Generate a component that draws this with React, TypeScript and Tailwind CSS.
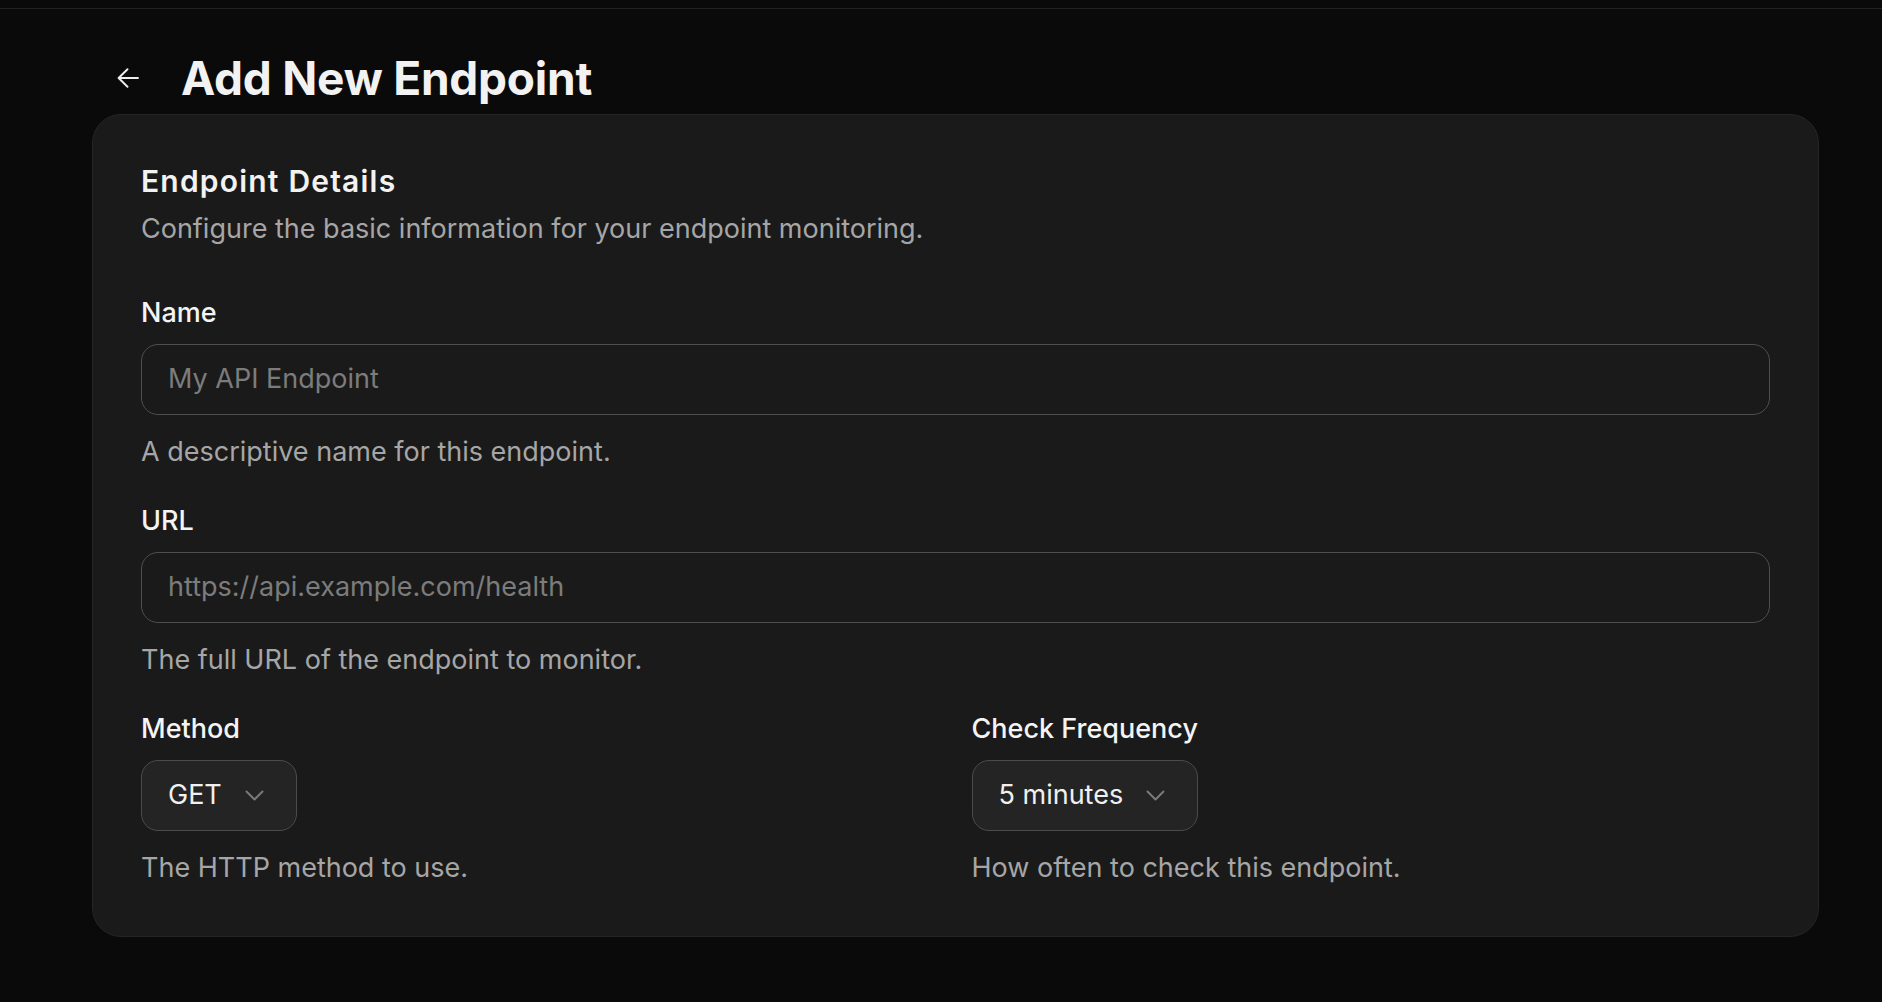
import React from "react";

function ArrowLeft() {
  return (
    <svg width="22" height="20" viewBox="0 0 22 20" fill="none" className="shrink-0">
      <path d="M21 10H1.8M10.5 1.2 1.6 10l8.9 8.8" stroke="#ededed" strokeWidth="1.9" strokeLinecap="round" strokeLinejoin="round" />
    </svg>
  );
}

function Chevron() {
  return (
    <svg width="19" height="11" viewBox="0 0 19 11" fill="none" className="shrink-0">
      <path d="M1.5 1.5 9.5 9.5l8-8" stroke="#7a7a7a" strokeWidth="2" strokeLinecap="round" strokeLinejoin="round" />
    </svg>
  );
}

function Field({ label, placeholder, help }: { label: string; placeholder: string; help: string }) {
  return (
    <div className="flex flex-col">
      <label className="text-[27px] leading-[40px] font-medium text-[#f4f4f4]">{label}</label>
      <div className="mt-[11px] flex h-[71px] items-center rounded-[17px] border border-[#4e4e4e] pl-[26px] text-[27px] text-[#7c7c7c]">
        {placeholder}
      </div>
      <p className="mt-[17px] text-[27px] leading-[40px] text-[#a6a6a6]">{help}</p>
    </div>
  );
}

function SelectField({ label, value, help }: { label: string; value: string; help: string }) {
  return (
    <div className="flex flex-col items-start">
      <label className="text-[27px] leading-[40px] font-medium text-[#f4f4f4]">{label}</label>
      <div className="mt-[11px] flex h-[71px] items-center gap-[23px] rounded-[17px] border border-[#4b4b4b] bg-[#242424] pl-[26px] pr-[32px] text-[27px] text-[#f0f0f0]">
        <span>{value}</span>
        <Chevron />
      </div>
      <p className="mt-[17px] text-[27px] leading-[40px] text-[#a6a6a6]">{help}</p>
    </div>
  );
}

export default function App() {
  return (
    <div className="min-h-screen bg-[#0a0a0a] font-['Inter','Liberation_Sans',sans-serif] antialiased">
      <div className="h-[9px] border-b border-[#222222]" />
      <div className="pl-[92px] pr-[63px]">
        <div className="mt-[43px] flex h-[52px] items-center">
          <div className="ml-[25px]">
            <ArrowLeft />
          </div>
          <h1 className="ml-[42px] text-[46px] leading-[52px] font-bold tracking-[-0.005em] text-[#f2f2f2]">Add New Endpoint</h1>
        </div>
        <div className="mt-[10px] rounded-[29px] border border-[#252525] bg-[#1a1a1a] p-12">
          <h2 className="text-[30px] leading-[36px] font-semibold tracking-[0.04em] text-[#f2f2f2]">Endpoint Details</h2>
          <p className="mt-[10px] text-[27px] leading-[40px] text-[#a6a6a6]">
            Configure the basic information for your endpoint monitoring.
          </p>
          <div className="mt-[44px] flex flex-col gap-[29px]">
            <Field label="Name" placeholder="My API Endpoint" help="A descriptive name for this endpoint." />
            <Field label="URL" placeholder="https://api.example.com/health" help="The full URL of the endpoint to monitor." />
            <div className="grid grid-cols-2 gap-8">
              <SelectField label="Method" value="GET" help="The HTTP method to use." />
              <SelectField label="Check Frequency" value="5 minutes" help="How often to check this endpoint." />
            </div>
          </div>
        </div>
      </div>
    </div>
  );
}
